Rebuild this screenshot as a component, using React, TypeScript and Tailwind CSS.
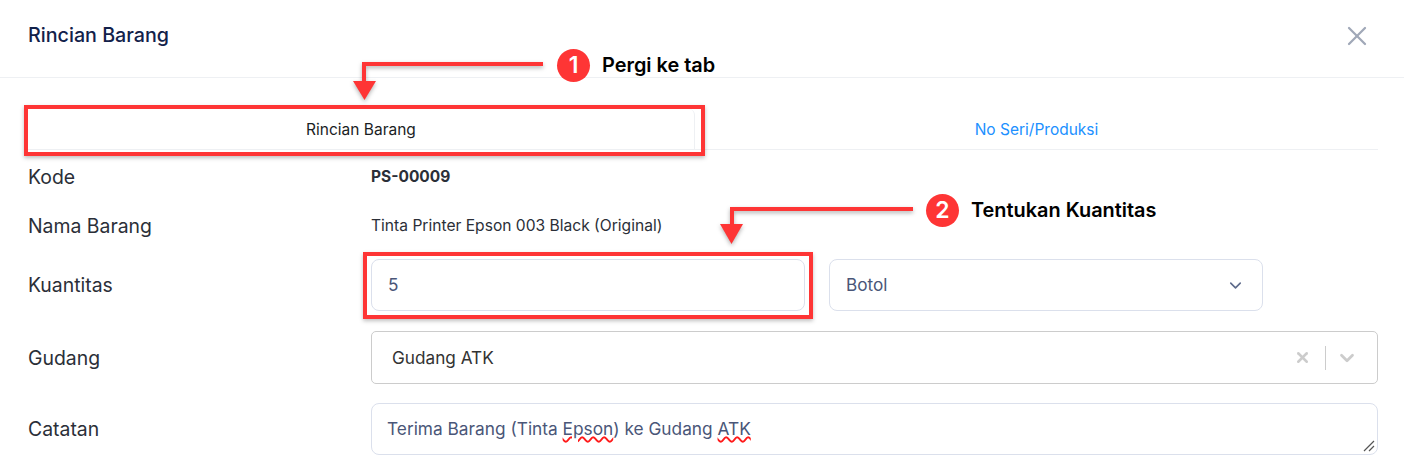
import React from 'react';
import { X, ChevronDown } from 'lucide-react';

const Label: React.FC<{ children: React.ReactNode }> = ({ children }) => (
  <div className="w-[343px] shrink-0 text-[19.4px] leading-[24px] text-[#2b2f38]">{children}</div>
);

const Squiggle: React.FC<{ children: React.ReactNode }> = ({ children }) => (
  <span className="underline decoration-wavy decoration-[#ff1a1a] decoration-[1.5px] underline-offset-[1px]">{children}</span>
);

const Step: React.FC<{ n: number; text: string }> = ({ n, text }) => (
  <div className="flex items-center gap-[12px]">
    <div className="w-[33px] h-[33px] rounded-full bg-[#fe3535] text-white text-[23px] font-semibold flex items-center justify-center">
      {n}
    </div>
    <span className="text-[19.9px] font-semibold text-black whitespace-nowrap">{text}</span>
  </div>
);

const App: React.FC = () => {
  return (
    <div className="relative w-[1404px] h-[464px] overflow-hidden bg-white font-['Inter',sans-serif]">
      {/* header */}
      <div className="h-[78px] border-b border-[#eef0f3] pl-[28px] pr-[31px] pt-[23px] flex justify-between">
        <h1 className="text-[19.7px] leading-[24px] font-medium text-[#12214a]">Rincian Barang</h1>
        <X className="w-[32px] h-[32px] -mt-[3px] text-[#a0a8b8]" strokeWidth={1.7} />
      </div>

      <div className="pl-[28px] pr-[26px]">
        {/* tabs */}
        <div className="mt-[31px] h-[41px] flex border-b border-[#eef0f3] text-[15.5px]">
          <div className="w-[667px] pt-[1px] bg-white border-r border-[#eef0f3] rounded-tr-[6px] flex items-center justify-center text-[#1a1d24]">
            Rincian Barang
          </div>
          <div className="flex-1 pt-[1px] flex items-center justify-center text-[#2090ff]">No Seri/Produksi</div>
        </div>

        {/* form */}
        <div className="flex items-center h-[24px] mt-[15px]">
          <Label>Kode</Label>
          <span className="text-[15.5px] font-bold text-[#2b2f38]">PS-00009</span>
        </div>
        <div className="flex items-center h-[24px] mt-[25px]">
          <Label>Nama Barang</Label>
          <span className="text-[15.6px] text-[#2b2f38]">Tinta Printer Epson 003 Black (Original)</span>
        </div>
        <div className="flex items-center h-[52px] mt-[21px]">
          <Label>Kuantitas</Label>
          <div className="w-[434px] h-full border border-[#dbe0ec] rounded-[8px] px-[16px] flex items-center text-[17.2px] text-[#4a5678]">
            5
          </div>
          <div className="w-[434px] h-full ml-[24px] border border-[#dbe0ec] rounded-[8px] pl-[16px] pr-[17px] flex items-center justify-between text-[17.2px] text-[#4a5678]">
            Botol
            <ChevronDown className="w-[19px] h-[19px] text-[#5d6a8a]" strokeWidth={2} />
          </div>
        </div>
        <div className="flex items-center h-[53px] mt-[20px]">
          <Label>Gudang</Label>
          <div className="flex-1 h-full border border-[#cccccc] rounded-[5px] pl-[20px] flex items-center justify-between text-[17.2px] text-[#333333]">
            Gudang ATK
            <div className="flex items-center">
              <X className="w-[17px] h-[17px] text-[#cccccc]" strokeWidth={3.5} />
              <div className="w-px h-[24px] bg-[#cccccc] ml-[14px] mr-[10px]" />
              <ChevronDown className="w-[22px] h-[22px] mr-[19px] text-[#cccccc]" strokeWidth={3} />
            </div>
          </div>
        </div>
        <div className="flex items-center h-[52px] mt-[19px]">
          <Label>Catatan</Label>
          <div className="relative flex-1 h-full border border-[#dbe0ec] rounded-[8px] pl-[15px] pr-[16px] flex items-center text-[17.3px] text-[#4a5678]">
            <span>
              Terima Barang (Tinta <Squiggle>Epson</Squiggle>) ke Gudang <Squiggle>ATK</Squiggle>
            </span>
            <svg className="absolute right-[2px] bottom-[2px]" width="12" height="12" viewBox="0 0 12 12" fill="none">
              <path d="M1 11 11 1M6 11l5-5" stroke="#555" strokeWidth="1.2" />
            </svg>
          </div>
        </div>
      </div>

      {/* petunjuk merah di atas screenshot */}
      <div className="absolute left-[24px] top-[105px] w-[681px] h-[51px] border-[4px] border-[#fe3535] shadow-[0_2px_4px_rgba(0,0,0,0.25)]" />
      <div className="absolute left-[363px] top-[252px] w-[450px] h-[67px] border-[4px] border-[#fe3535] shadow-[0_2px_4px_rgba(0,0,0,0.25)]" />

      <svg className="absolute left-0 top-0 pointer-events-none drop-shadow-[0_2px_2px_rgba(0,0,0,0.3)]" width="1404" height="464" fill="none">
        <path d="M543 64H364V82" stroke="#fe3535" strokeWidth="4" />
        <path d="M353 81h23l-11.500 19z" fill="#fe3535" />
        <path d="M913 209H732V226" stroke="#fe3535" strokeWidth="4" />
        <path d="M720 224h23l-11.500 20z" fill="#fe3535" />
      </svg>

      <div className="absolute left-[557px] top-[49px]">
        <Step n={1} text="Pergi ke tab" />
      </div>
      <div className="absolute left-[926px] top-[194px]">
        <Step n={2} text="Tentukan Kuantitas" />
      </div>
    </div>
  );
};

export default App;
